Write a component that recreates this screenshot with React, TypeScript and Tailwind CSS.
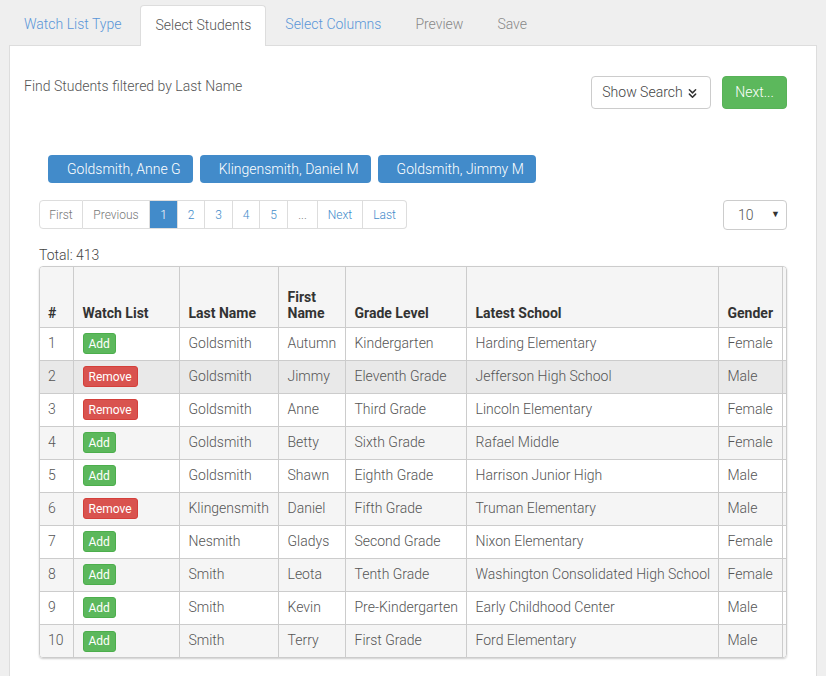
import React from 'react';
import { ChevronsDown } from 'lucide-react';

type Student = {
  n: number;
  onList: boolean;
  last: string;
  first: string;
  grade: string;
  school: string;
  gender: string;
};

const students: Student[] = [
  { n: 1, onList: false, last: 'Goldsmith', first: 'Autumn', grade: 'Kindergarten', school: 'Harding Elementary', gender: 'Female' },
  { n: 2, onList: true, last: 'Goldsmith', first: 'Jimmy', grade: 'Eleventh Grade', school: 'Jefferson High School', gender: 'Male' },
  { n: 3, onList: true, last: 'Goldsmith', first: 'Anne', grade: 'Third Grade', school: 'Lincoln Elementary', gender: 'Female' },
  { n: 4, onList: false, last: 'Goldsmith', first: 'Betty', grade: 'Sixth Grade', school: 'Rafael Middle', gender: 'Female' },
  { n: 5, onList: false, last: 'Goldsmith', first: 'Shawn', grade: 'Eighth Grade', school: 'Harrison Junior High', gender: 'Male' },
  { n: 6, onList: true, last: 'Klingensmith', first: 'Daniel', grade: 'Fifth Grade', school: 'Truman Elementary', gender: 'Male' },
  { n: 7, onList: false, last: 'Nesmith', first: 'Gladys', grade: 'Second Grade', school: 'Nixon Elementary', gender: 'Female' },
  { n: 8, onList: false, last: 'Smith', first: 'Leota', grade: 'Tenth Grade', school: 'Washington Consolidated High School', gender: 'Female' },
  { n: 9, onList: false, last: 'Smith', first: 'Kevin', grade: 'Pre-Kindergarten', school: 'Early Childhood Center', gender: 'Male' },
  { n: 10, onList: false, last: 'Smith', first: 'Terry', grade: 'First Grade', school: 'Ford Elementary', gender: 'Male' },
];

const chips = ['Goldsmith, Anne G', 'Klingensmith, Daniel M', 'Goldsmith, Jimmy M'];

const pages = [
  { label: 'First', w: 'w-[44px]', tone: 'muted' },
  { label: 'Previous', w: 'w-[67px]', tone: 'muted' },
  { label: '1', w: 'w-[28px]', tone: 'active' },
  { label: '2', w: 'w-[27px]', tone: 'link' },
  { label: '3', w: 'w-[28px]', tone: 'link' },
  { label: '4', w: 'w-[27px]', tone: 'link' },
  { label: '5', w: 'w-[28px]', tone: 'link' },
  { label: '...', w: 'w-[30px]', tone: 'muted' },
  { label: 'Next', w: 'w-[45px]', tone: 'link' },
  { label: 'Last', w: 'w-[44px]', tone: 'link' },
];

const App: React.FC = () => {
  return (
    <div
      className="w-[826px] h-[676px] overflow-hidden bg-[#efefef] pt-[4px] px-[9px] text-[14px]"
      style={{ fontFamily: 'Roboto, "Liberation Sans", sans-serif' }}
    >
      {/* tabs */}
      <div className="flex h-[41px] items-end">
        <div className="h-[40px] flex items-center pl-[15px] pr-[19px] pb-[2px] text-[#5a96d8] font-light">Watch List Type</div>
        <div className="h-[41px] flex items-center px-[14px] mr-[4px] pb-[2px] bg-white border border-b-0 border-[#dddddd] rounded-t-[4px] text-[#555] font-light relative top-[1px]">
          Select Students
        </div>
        <div className="h-[40px] flex items-center px-[15px] mr-[4px] pb-[2px] text-[#5a96d8] font-light">Select Columns</div>
        <div className="h-[40px] flex items-center px-[15px] mr-[4px] pb-[2px] text-[#888] font-light">Preview</div>
        <div className="h-[40px] flex items-center px-[15px] pb-[2px] text-[#888] font-light">Save</div>
      </div>

      {/* panel */}
      <div className="bg-white border border-[#dddddd] h-[700px] pt-[30px] px-[14px]">
        <div className="flex justify-between items-start pr-[15px]">
          <div className="leading-[20px] text-[#555] font-light">Find Students filtered by Last Name</div>
          <div className="flex gap-[11px]">
            <button className="h-[33px] w-[120px] flex items-center justify-center gap-[2px] border border-[#cccccc] rounded-[4px] bg-white text-[#444] font-light">
              Show Search
              <ChevronsDown size={15} strokeWidth={2.4} className="text-[#333] mt-[1px]" />
            </button>
            <button className="h-[33px] w-[65px] flex items-center justify-center rounded-[4px] bg-[#5cb85c] border border-[#58b258] text-white font-light">
              Next...
            </button>
          </div>
        </div>

        <div className="px-[15px]">
          {/* selected chips */}
          <div className="flex gap-[7px] pl-[9px] mt-[46px]">
            {chips.map((c) => (
              <div
                key={c}
                className="h-[28px] pl-[19px] pr-[12px] flex items-center rounded-[4px] bg-[#428bca] text-white font-light"
              >
                {c}
              </div>
            ))}
          </div>

          {/* pagination + page size */}
          <div className="flex justify-between items-start mt-[17px]">
            <div className="flex h-[29px] text-[12px] font-light">
              {pages.map((p, i) => (
                <div
                  key={p.label}
                  className={[
                    p.w,
                    'flex items-center justify-center border-y border-r border-[#dddddd]',
                    i === 0 ? 'border-l rounded-l-[4px]' : '',
                    i === pages.length - 1 ? 'rounded-r-[4px]' : '',
                    p.tone === 'active'
                      ? 'bg-[#428bca] border-[#428bca] text-white'
                      : p.tone === 'link'
                      ? 'bg-white text-[#428bca]'
                      : 'bg-white text-[#777]',
                  ].join(' ')}
                >
                  {p.label}
                </div>
              ))}
            </div>
            <div className="w-[64px] h-[30px] border border-[#cccccc] rounded-[4px] flex items-center justify-between pl-[14px] pr-[6px] text-[#555] font-light">
              <span>10</span>
              <span className="text-[9px] text-[#333]">▼</span>
            </div>
          </div>

          <div className="mt-[15px] leading-[20px] text-[#444] font-light">Total: 413</div>

          {/* table */}
          <div className="mt-[1px] w-[748px] border border-[#cccccc] rounded-[4px] overflow-hidden shadow-[0_1px_2px_rgba(0,0,0,0.2)]">
            <table className="table-fixed border-collapse text-[14px] w-[750px]">
              <colgroup>
                <col className="w-[33px]" />
                <col className="w-[106px]" />
                <col className="w-[99px]" />
                <col className="w-[67px]" />
                <col className="w-[121px]" />
                <col className="w-[252px]" />
                <col className="w-[64px]" />
                <col className="w-[8px]" />
              </colgroup>
              <thead>
                <tr className="h-[60px] bg-[#f5f5f5] text-[#333]">
                  {['#', 'Watch List', 'Last Name', 'First Name', 'Grade Level', 'Latest School', 'Gender', ''].map((h, i) => (
                    <th
                      key={i}
                      className={
                        'align-bottom text-left font-bold leading-[16px] pr-[8px] pb-[6px] border-[#cccccc] ' +
                        (i === 0 ? 'border-r pl-[8px]' : i === 7 ? 'border-l pl-[9px]' : 'border-x pl-[9px]')
                      }
                    >
                      {h}
                    </th>
                  ))}
                </tr>
              </thead>
              <tbody>
                {students.map((s) => (
                  <tr
                    key={s.n}
                    className={
                      'h-[33px] text-[#555] font-light ' +
                      (s.n === 2 ? 'bg-[#e9e9e9]' : s.n % 2 === 0 ? 'bg-[#f5f5f5]' : 'bg-white')
                    }
                  >
                    <td className="px-[8px] border-t border-r border-[#cccccc]">{s.n}</td>
                    <td className="pl-[9px] pr-[8px] border border-b-0 border-[#cccccc]">
                      {s.onList ? (
                        <span className="inline-flex h-[21px] items-center px-[5px] rounded-[3px] bg-[#d9534f] border border-[#d43f3a] text-white text-[12px] font-normal">
                          Remove
                        </span>
                      ) : (
                        <span className="inline-flex h-[21px] items-center px-[5px] rounded-[3px] bg-[#5cb85c] border border-[#4cae4c] text-white text-[12px] font-normal">
                          Add
                        </span>
                      )}
                    </td>
                    <td className="pl-[9px] pr-[8px] border border-b-0 border-[#cccccc] whitespace-nowrap">{s.last}</td>
                    <td className="pl-[9px] pr-[8px] border border-b-0 border-[#cccccc] whitespace-nowrap">{s.first}</td>
                    <td className="pl-[9px] pr-[8px] border border-b-0 border-[#cccccc] whitespace-nowrap">{s.grade}</td>
                    <td className="pl-[9px] pr-[8px] border border-b-0 border-[#cccccc] whitespace-nowrap">{s.school}</td>
                    <td className="pl-[9px] pr-[8px] border border-b-0 border-[#cccccc] whitespace-nowrap">{s.gender}</td>
                    <td className="border-t border-l border-[#cccccc]"></td>
                  </tr>
                ))}
              </tbody>
            </table>
          </div>
        </div>
      </div>
    </div>
  );
};

export default App;
